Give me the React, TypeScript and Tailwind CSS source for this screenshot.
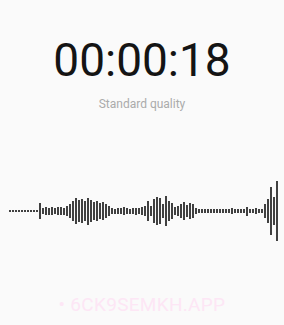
const bars = [
  2, 2, 2, 2, 2, 2, 2, 2, 2, 2,
  16,
  6, 8, 7, 8, 6, 8, 8, 7, 10,
  14,
  20, 26, 22, 24, 20, 27, 22, 18, 20,
  16, 18, 14, 10,
  6, 5, 6, 6, 8, 6, 5, 6, 7, 6, 8, 10,
  20,
  10, 24, 28, 26, 14, 30, 20, 16,
  8, 10, 14, 18, 12, 16,
  14, 6,
  4, 4, 4, 4, 4, 4, 4, 4, 4, 4, 4, 6, 4, 4, 4, 4,
  9, 4, 4, 6, 4, 4,
  14, 24, 48, 28, 60,
];

export default function App() {
  return (
    <div
      className="w-[284px] h-[325px] bg-[#fafafa] flex flex-col items-center overflow-hidden"
      style={{ fontFamily: "Roboto, 'Noto Sans', sans-serif" }}
    >
      <div className="mt-[33px] h-[54px] flex items-center text-[46px] leading-none text-[#141414]">
        00:00:18
      </div>
      <div className="mt-[11px] text-[12px] leading-none text-[#ababab]">Standard quality</div>

      <div className="mt-[69px] self-stretch h-[64px] flex items-center gap-[1px] pl-[9px]">
        {bars.map((h, i) => (
          <div
            key={i}
            className="w-[2px] shrink-0 bg-[#404040]"
            style={{ height: h }}
          />
        ))}
      </div>

      <div className="mt-[52px] text-[19px] leading-none text-[#fde6f5] tracking-[0.3px]">
        • 6CK9SEMKH.APP
      </div>
    </div>
  );
}
